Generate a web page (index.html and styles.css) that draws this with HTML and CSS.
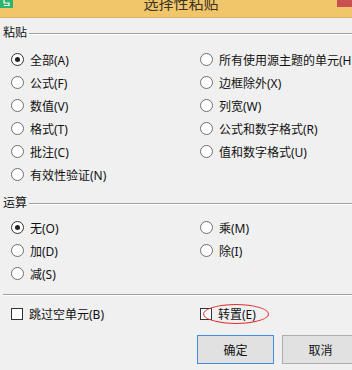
FILE: index.html
```html
<!DOCTYPE html>
<html lang="zh-CN">
<head>
  <meta charset="UTF-8" />
  <title>选择性粘贴</title>
  <link rel="stylesheet" href="styles.css">
</head>
<body>
  <div class="titlebar">
    <span class="app-icon">
      <svg width="13" height="8" viewBox="0 0 13 8"><path d="M4 -2 H9 M4 -2 V3 H9 V5.5 H4" fill="none" stroke="#fff" stroke-width="1.2"/></svg>
    </span>
    <span class="title">选择性粘贴</span>
    <span class="close"></span>
  </div>

  <!-- 粘贴 -->
  <div class="group-head"><span>粘贴</span></div>
  <div class="options paste">
    <label class="opt"><span class="radio checked"></span>全部(A)</label>
    <label class="opt"><span class="radio"></span>所有使用源主题的单元(H)</label>
    <label class="opt"><span class="radio"></span>公式(F)</label>
    <label class="opt"><span class="radio"></span>边框除外(X)</label>
    <label class="opt"><span class="radio"></span>数值(V)</label>
    <label class="opt"><span class="radio"></span>列宽(W)</label>
    <label class="opt"><span class="radio"></span>格式(T)</label>
    <label class="opt"><span class="radio"></span>公式和数字格式(R)</label>
    <label class="opt"><span class="radio"></span>批注(C)</label>
    <label class="opt"><span class="radio"></span>值和数字格式(U)</label>
    <label class="opt"><span class="radio"></span>有效性验证(N)</label>
  </div>

  <!-- 运算 -->
  <div class="group-head ops-head"><span>运算</span></div>
  <div class="options ops">
    <label class="opt"><span class="radio checked"></span>无(O)</label>
    <label class="opt"><span class="radio"></span>乘(M)</label>
    <label class="opt"><span class="radio"></span>加(D)</label>
    <label class="opt"><span class="radio"></span>除(I)</label>
    <label class="opt"><span class="radio"></span>减(S)</label>
  </div>

  <div class="separator"></div>

  <div class="options checks">
    <label class="opt check-opt"><span class="box"></span>跳过空单元(B)</label>
    <label class="opt check-opt marked"><span class="box"></span>转置(E)<span class="ring"></span></label>
  </div>

  <div class="buttons">
    <button class="btn default">确定</button>
    <button class="btn">取消</button>
  </div>
</body>
</html>
```

FILE: styles.css
```css
html, body {
  margin: 0;
  padding: 0;
}

body {
  width: 352px;
  height: 370px;
  overflow: hidden;
  background: #f0f0f0;
  font-family: "Noto Sans", "Noto Sans CJK SC", sans-serif;
  font-size: 12px;
  color: #111;
}

.titlebar {
  position: relative;
  height: 17px;
  background: #f1c66a;
  border-bottom: 1px solid #d9b460;
  overflow: hidden;
  display: flex;
  justify-content: center;
}

.app-icon {
  position: absolute;
  left: 0;
  top: 0;
  width: 13px;
  height: 8px;
  background: #2fb36d;
}

.app-icon svg {
  display: block;
}

.close {
  position: absolute;
  right: 0;
  top: 0;
  width: 15px;
  height: 7px;
  background: #c9514f;
}

.title {
  font-size: 15px;
  line-height: 17px;
  margin-top: -5px;
  margin-left: 10px;
  color: #3a3326;
}

.group-head {
  display: flex;
  align-items: center;
  height: 14px;
  margin-top: 8px;
  padding-left: 3px;
  gap: 2px;
}

.group-head span {
  line-height: 14px;
}

.group-head::after {
  content: "";
  flex: 1;
  border-top: 1px solid #a0a0a0;
  border-bottom: 1px solid #fff;
  margin-top: 1px;
}

.ops-head {
  margin-top: 10px;
}

.options {
  display: grid;
  grid-template-columns: 189px 1fr;
  grid-auto-rows: 23px;
  padding-left: 11px;
  margin-top: 8px;
}

.ops {
  margin-top: 6px;
}

.opt {
  display: flex;
  align-items: center;
  white-space: nowrap;
  overflow: hidden;
}

.radio {
  box-sizing: border-box;
  width: 13px;
  height: 13px;
  border: 1px solid #6f6f6f;
  border-radius: 50%;
  background: #fff;
  margin-right: 6px;
  flex-shrink: 0;
  display: flex;
  align-items: center;
  justify-content: center;
}

.radio.checked {
  border-color: #333;
}

.radio.checked::after {
  content: "";
  width: 5px;
  height: 5px;
  border-radius: 50%;
  background: #222;
}

.separator {
  margin: 9px 0 0 3px;
  border-top: 1px solid #a0a0a0;
  border-bottom: 1px solid #fff;
}

.checks {
  margin-top: 6px;
}

.check-opt {
  overflow: visible;
}

.box {
  box-sizing: border-box;
  width: 12px;
  height: 12px;
  border: 1px solid #333;
  background: #fff;
  margin-right: 6px;
  flex-shrink: 0;
}

.marked {
  position: relative;
}

.ring {
  position: absolute;
  left: 3px;
  top: 2px;
  width: 66px;
  height: 20px;
  box-sizing: border-box;
  border: 1px solid #e0302f;
  border-radius: 50%;
}

.buttons {
  display: flex;
  gap: 8px;
  margin-top: 10px;
  padding-left: 197px;
}

.btn {
  flex-shrink: 0;
  box-sizing: border-box;
  width: 77px;
  height: 29px;
  background: #e1e1e1;
  border: 1px solid #adadad;
  font-family: "Noto Sans", "Noto Sans CJK SC", sans-serif;
  font-size: 12px;
  color: #111;
  padding: 0;
}

.btn.default {
  border-color: #3c8fe3;
}
```
